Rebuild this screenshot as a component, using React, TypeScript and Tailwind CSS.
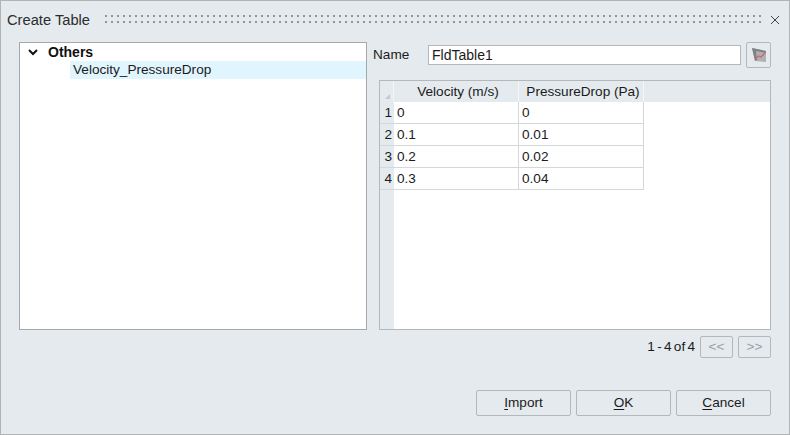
const ROWS = [
  ['1', '0', '0'],
  ['2', '0.1', '0.01'],
  ['3', '0.2', '0.02'],
  ['4', '0.3', '0.04'],
];

const Dots = () => (
  <div className="mb-[2px] ml-[15px] mr-[6px] flex h-[8px] flex-1 flex-col justify-between">
    <div className="h-[2px] bg-[linear-gradient(to_right,#8f969b_2px,transparent_2px)] bg-[length:6px_2px]" />
    <div className="h-[2px] bg-[linear-gradient(to_right,#8f969b_2px,transparent_2px)] bg-[length:6px_2px]" />
  </div>
);

const TableIcon = () => (
  <svg width="18" height="18" viewBox="0 0 18 18">
    <path d="M2 2 L16 5 L16 16 L5 15 Z" fill="#aeb0b2" />
    <path d="M2 2 L5 15 L7 14 L6 5 L16 7 L16 5 Z" fill="#808284" />
    <path d="M5 13 L9 10 L11 11 L15 7" fill="none" stroke="#cf646c" strokeWidth="1.3" />
  </svg>
);

const FooterButton = ({ mnemonic, rest }: { mnemonic: string; rest: string }) => (
  <button className="flex h-[26px] w-[95px] items-center justify-center rounded-[2px] border border-[#b4b8bb] bg-[#e4eaee] text-[#1b1b1b]">
    <span className="underline underline-offset-2">{mnemonic}</span>
    {rest}
  </button>
);

const PageButton = ({ label }: { label: string }) => (
  <button className="flex h-[22px] w-[33px] items-center justify-center rounded-[2px] border border-[#b4b8bb] bg-[#e4eaee] text-[#9a9fa3]">
    {label}
  </button>
);

export default function App() {
  return (
    <div className="flex h-[435px] w-[790px] flex-col border border-[#b0b4b7] bg-[#e4eaee] font-['Liberation_Sans',Arial,sans-serif] text-[13.6px] text-[#1b1b1b]">
      {/* title bar */}
      <div className="flex h-[38px] items-center pl-[6px] pr-[3px]">
        <span className="text-[14.7px] text-[#2c2c2c]">Create Table</span>
        <Dots />
        <svg className="ml-[3px] mr-[6px]" width="10" height="10" viewBox="0 0 10 10">
          <path d="M1 1 L9 9 M9 1 L1 9" stroke="#444" strokeWidth="1" />
        </svg>
      </div>

      <div className="ml-[18px] mr-[18px] mt-[3px] flex h-[288px]">
        {/* tree */}
        <div className="h-full w-[349px] border border-[#a5a9ac] bg-white pt-[1px]">
          <div className="flex h-[17px] items-center">
            <svg className="ml-[8px]" width="10" height="7" viewBox="0 0 10 7">
              <path d="M1 1 L5 5 L9 1" fill="none" stroke="#111" strokeWidth="2" />
            </svg>
            <span className="ml-[10px] text-[14px] font-bold text-[#111]">Others</span>
          </div>
          <div className="ml-[50px] flex h-[18px] items-center bg-[#e1f5fe] pl-[3px]">Velocity_PressureDrop</div>
        </div>

        {/* right side */}
        <div className="ml-[6px] flex flex-1 flex-col">
          <div className="flex h-[26px] items-center">
            <span className="w-[55px]">Name</span>
            <input
              readOnly
              value="FldTable1"
              className="h-[20px] w-[313px] border border-[#b4b8bb] bg-white pl-[3px] text-[14px] text-[#1b1b1b] outline-none"
            />
            <button className="ml-[5px] flex h-[26px] w-[25px] items-center justify-center rounded-[2px] border border-[#b4b8bb] bg-[#e4eaee]">
              <TableIcon />
            </button>
          </div>

          <div className="ml-[6px] mt-[12px] flex flex-1 flex-col border border-[#b4b8bb] bg-white">
            <div className="flex h-[21px] bg-[#e4eaee]">
              <div className="relative w-[14px] border-r border-[#f4f6f7]">
                <svg className="absolute bottom-[3px] right-[3px]" width="5" height="5" viewBox="0 0 5 5">
                  <path d="M5 0 L5 5 L0 5 Z" fill="#c4c8cb" />
                </svg>
              </div>
              <div className="flex w-[125px] items-center justify-center border-r border-[#f4f6f7] pl-[4px] pt-[1px]">Velocity (m/s)</div>
              <div className="flex w-[125px] items-center justify-center border-r border-[#f4f6f7] pl-[4px] pt-[1px]">PressureDrop (Pa)</div>
            </div>
            <div className="flex flex-1">
              <div className="w-[14px] bg-[#e4eaee]">
                {ROWS.map((row) => (
                  <div key={row[0]} className="flex h-[22px] items-center justify-end border-b border-[#d4d8db] pr-[2px] pt-[1px]">
                    {row[0]}
                  </div>
                ))}
              </div>
              <div className="w-[250px]">
                {ROWS.map((row) => (
                  <div key={row[0]} className="flex h-[22px] border-b border-[#d4d8db]">
                    <div className="flex w-[125px] items-center border-r border-[#d4d8db] pl-[3px] pt-[1px]">{row[1]}</div>
                    <div className="flex w-[125px] items-center border-r border-[#d4d8db] pl-[3px] pt-[1px]">{row[2]}</div>
                  </div>
                ))}
              </div>
            </div>
          </div>
        </div>
      </div>

      {/* pagination */}
      <div className="mr-[18px] mt-[6px] flex items-center justify-end gap-[5px]">
        <span className="[word-spacing:-1.5px]">1 - 4 of 4</span>
        <PageButton label="<<" />
        <PageButton label=">>" />
      </div>

      {/* footer */}
      <div className="mr-[18px] mt-[32px] flex justify-end gap-[5px]">
        <FooterButton mnemonic="I" rest="mport" />
        <FooterButton mnemonic="O" rest="K" />
        <FooterButton mnemonic="C" rest="ancel" />
      </div>
    </div>
  );
}
